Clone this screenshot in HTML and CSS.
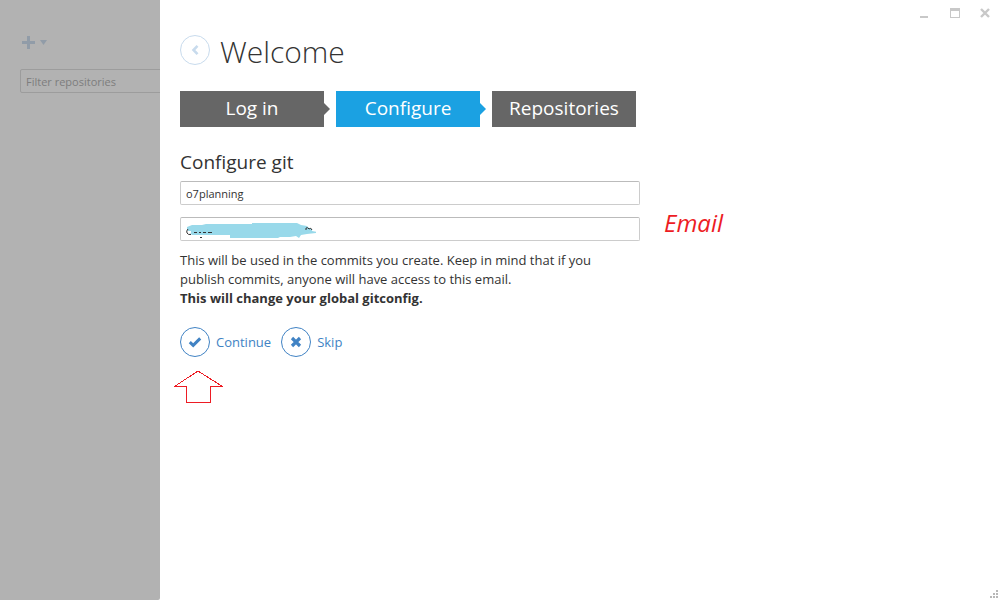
FILE: index.html
```html
<!DOCTYPE html>
<html lang="en">
<head>
<meta charset="utf-8">
<title>Welcome</title>
<link rel="stylesheet" href="styles.css">
</head>
<body>
<div class="app">
  <aside class="sidebar">
    <button class="add" type="button" aria-label="Add repository">
      <svg width="28" height="14" viewBox="0 0 28 14"><path d="M5 0h3v5h5v3H8v5H5V8H0V5h5z"/><path d="M18 4h7l-3.500 5z"/></svg>
    </button>
    <input class="filter" type="text" placeholder="Filter repositories" aria-label="Filter repositories">
  </aside>
  <main class="main">
    <div class="window-controls">
      <button type="button" aria-label="Minimize"><svg width="10" height="10" viewBox="0 0 10 10"><path d="M0 8h8v2H0z"/></svg></button>
      <button type="button" aria-label="Maximize"><svg width="10" height="10" viewBox="0 0 10 10"><path fill-rule="evenodd" d="M0 0h10v10H0zM1 3v6h8V3z"/></svg></button>
      <button type="button" aria-label="Close"><svg width="10" height="10" viewBox="0 0 10 10"><path d="M1 1l8 8M9 1L1 9" stroke="#c8c8c8" stroke-width="2.400"/></svg></button>
    </div>
    <header class="heading">
      <button class="circle back" type="button" aria-label="Back"><svg width="10" height="12" viewBox="0 0 10 12"><path d="M7.500 1.800L3.500 6l4 4.200" fill="none" stroke="#c8dbed" stroke-width="2.600"/></svg></button>
      <h1>Welcome</h1>
    </header>
    <ol class="steps">
      <li class="step">Log in</li>
      <li class="step active">Configure</li>
      <li class="step">Repositories</li>
    </ol>
    <form class="config">
      <h2>Configure git</h2>
      <input class="field" type="text" value="o7planning" aria-label="Name">
      <div class="email-row">
        <div class="email-box">
          <input class="field" type="text" id="email" value="">
          <svg class="redaction" width="136" height="22" viewBox="0 0 136 22" aria-hidden="true">
            <path d="M7 8l5-2h10l4-1h46V4h45l4 2 6 1 2 2 3 1v2l5 1v1l-10 1-6 1-2 3-3-2-6 1h-10l-2 1H50v-3H12l-4-4-1-2z" fill="#99d9ea"/>
            <path d="M8 13h3" fill="none" stroke="#fff" stroke-width="2"/>
            <path d="M8 10q-2 2-1 4t4 1.500M14 13.500h3M19 13.500h2M23 13.500h3M28 13.500h4M20 18.500h2M126 11v-2q2-1 3 1q2-2 3 1" fill="none" stroke="#333"/>
          </svg>
        </div>
        <label class="annotation" for="email">Email</label>
      </div>
      <p class="note">This will be used in the commits you create. Keep in mind that if you publish commits, anyone will have access to this email.<br><strong>This will change your global gitconfig.</strong></p>
      <div class="actions">
        <button class="action" type="button"><span class="circle"><svg width="14" height="12" viewBox="0 0 14 12"><path d="M1.800 6.200L5.200 9.400 12.200 2.400" fill="none" stroke="#4183c4" stroke-width="3"/></svg></span>Continue</button>
        <button class="action" type="button"><span class="circle"><svg width="12" height="12" viewBox="0 0 12 12"><path d="M2 2l8 8M10 2l-8 8" fill="none" stroke="#4183c4" stroke-width="3.200"/></svg></span>Skip</button>
      </div>
    </form>
    <svg class="pointer" width="50" height="34" viewBox="0 0 50 34" aria-hidden="true"><path d="M25 1L1.500 16.500H13.500V32.500H37.500V16.500H49.500z" fill="none" stroke="#ed1c24" shape-rendering="crispEdges"/></svg>
    <svg class="grip" width="10" height="10" viewBox="0 0 10 10" aria-hidden="true"><path d="M7 1h2v2H7zM4 4h2v2H4zM7 4h2v2H7zM1 7h2v2H1zM4 7h2v2H4zM7 7h2v2H7z"/></svg>
  </main>
</div>
</body>
</html>
```
FILE: styles.css
```css
* { box-sizing: border-box; }

body {
  margin: 0;
  background: #fff;
  color: #333;
  font-family: "Open Sans", "Noto Sans", sans-serif;
  font-size: 13px;
}

button {
  margin: 0;
  padding: 0;
  border: 0;
  background: none;
  font: inherit;
}

svg { display: block; }

.app {
  display: grid;
  grid-template-columns: 160px 1fr;
  min-height: 100vh;
}

.sidebar {
  padding: 36px 0 0 20px;
  overflow: hidden;
  background: #b2b2b2;
  border-bottom-right-radius: 2px;
}

.add {
  display: block;
  padding-left: 2px;
  margin-bottom: 19px;
  fill: #919ca8;
}

.filter,
.field {
  display: block;
  height: 24px;
  padding: 0 5px;
  border: 1px solid #ccc;
  border-top-color: #bbb;
  border-radius: 2px;
  background: #fff;
  color: #333;
  font: 11px "Open Sans", "Noto Sans", sans-serif;
}

.filter {
  width: 180px;
  border-color: #9c9c9c;
  background: transparent;
}

.filter::placeholder {
  color: #7d7d7d;
  opacity: 1;
}

.main {
  position: relative;
  padding: 35px 20px 20px;
}

.window-controls {
  position: absolute;
  top: 8px;
  right: 10px;
  display: flex;
  gap: 20px;
  fill: #c8c8c8;
}

.heading {
  display: flex;
  align-items: center;
  gap: 10px;
  height: 30px;
}

.circle {
  display: flex;
  flex: none;
  align-items: center;
  justify-content: center;
  width: 30px;
  height: 30px;
  border: 1px solid #4183c4;
  border-radius: 50%;
}

.back { border-color: #c8dbed; }

h1 {
  margin: 0;
  padding-top: 4px;
  font-size: 30px;
  font-weight: 300;
  line-height: 32px;
}

.steps {
  display: flex;
  gap: 12px;
  margin: 26px 0 22px;
  padding: 0;
  list-style: none;
}

.step {
  position: relative;
  width: 144px;
  padding-bottom: 2px;
  background: #666;
  color: #fff;
  font-size: 19px;
  line-height: 34px;
  text-align: center;
}

.step:not(:last-child)::after {
  content: "";
  position: absolute;
  top: 12px;
  left: 100%;
  border: 6px solid transparent;
  border-left-color: #666;
  border-right-width: 0;
}

.active { background: #1ba1e2; }

.step.active::after { border-left-color: #1ba1e2; }

h2 {
  margin: 0 0 6px;
  font-size: 19px;
  font-weight: 400;
  line-height: 26px;
}

.field {
  width: 100%;
  max-width: 460px;
}

.email-row {
  display: flex;
  align-items: center;
  gap: 24px;
  margin: 12px 0 10px;
}

.email-box {
  position: relative;
  flex: 0 1 460px;
}

.redaction {
  position: absolute;
  top: 2px;
  left: 0;
}

.annotation {
  height: 24px;
  color: #ed1c24;
  font-size: 24px;
  font-style: italic;
  line-height: 12px;
}

.note {
  max-width: 440px;
  margin: 0 0 19px;
  line-height: 19px;
}

.actions {
  display: flex;
  gap: 10px;
}

.action {
  display: flex;
  align-items: center;
  gap: 6px;
  color: #4183c4;
}

.pointer {
  margin: 13px 0 0 -7px;
}

.grip {
  position: absolute;
  right: 1px;
  bottom: 1px;
  fill: #b8b8b8;
}
```
